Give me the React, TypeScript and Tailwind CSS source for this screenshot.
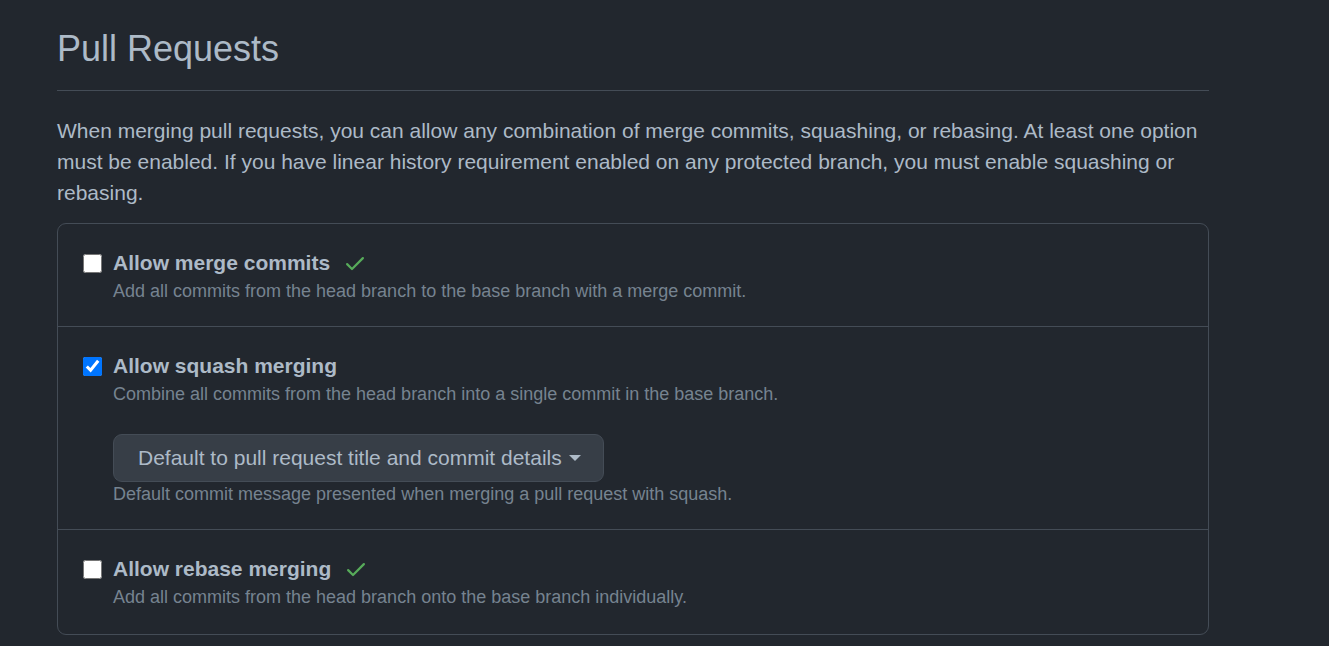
import React from "react";

function CheckIcon() {
  return (
    <svg viewBox="0 0 16 16" width="24" height="24" className="ml-[13px] shrink-0 fill-[#57ab5a]">
      <path d="M13.78 4.22a.75.75 0 0 1 0 1.06l-7.25 7.25a.75.75 0 0 1-1.06 0L2.22 9.28a.751.751 0 0 1 .018-1.042.751.751 0 0 1 1.042-.018L6 10.94l6.72-6.72a.75.75 0 0 1 1.06 0Z" />
    </svg>
  );
}

interface OptionProps {
  label: string;
  description: string;
  checked?: boolean;
  showCheck?: boolean;
  children?: React.ReactNode;
}

function MergeOption({ label, description, checked = false, showCheck = false, children }: OptionProps) {
  return (
    <div className="pt-6 pb-[23px] last:pb-[25px] pl-[25px] pr-6 border-t border-[#444c56] first:border-t-0">
      <div className="flex items-center h-[30px]">
        <div className="w-[30px] shrink-0 flex items-center">
          <input type="checkbox" defaultChecked={checked} className="w-[19px] h-[19px] m-0" />
        </div>
        <span className="font-bold text-[21px] leading-[30px] text-[#adbac7]">{label}</span>
        {showCheck && <CheckIcon />}
      </div>
      <p className="pl-[30px] mt-[1px] text-[18px] leading-[24px] text-[#768390]">{description}</p>
      {children}
    </div>
  );
}

export default function App() {
  return (
    <div
      className="min-h-screen bg-[#22272e] text-[#adbac7]"
      style={{ fontFamily: '"Liberation Sans", Arial, sans-serif' }}
    >
      <div className="ml-[57px] w-[1152px] pt-[22px]">
        {/* Subhead */}
        <div className="border-b border-[#444c56] pb-[14px]">
          <h2 className="text-[36px] leading-[54px] font-normal text-[#adbac7]">Pull Requests</h2>
        </div>

        <p className="mt-[24px] text-[21px] leading-[31px] text-[#adbac7]">
          When merging pull requests, you can allow any combination of merge commits, squashing, or rebasing. At least
          one option must be enabled. If you have linear history requirement enabled on any protected branch, you must
          enable squashing or rebasing.
        </p>

        <div className="mt-[15px] border border-[#444c56] rounded-[9px]">
          <MergeOption
            label="Allow merge commits"
            description="Add all commits from the head branch to the base branch with a merge commit."
            showCheck
          />
          <MergeOption
            label="Allow squash merging"
            description="Combine all commits from the head branch into a single commit in the base branch."
            checked
          >
            <div className="pl-[30px] mt-[28px]">
              <button className="h-[48px] flex items-center pl-[24px] pr-[22px] bg-[#373e47] border border-[#444c56] rounded-[9px] text-[21px] text-[#adbac7]">
                Default to pull request title and commit details
                <span className="ml-[7px] w-0 h-0 border-x-[6px] border-x-transparent border-t-[6px] border-t-[#adbac7]" />
              </button>
              <p className="text-[18px] leading-[24px] text-[#768390]">
                Default commit message presented when merging a pull request with squash.
              </p>
            </div>
          </MergeOption>
          <MergeOption
            label="Allow rebase merging"
            description="Add all commits from the head branch onto the base branch individually."
            showCheck
          />
        </div>
      </div>
    </div>
  );
}
